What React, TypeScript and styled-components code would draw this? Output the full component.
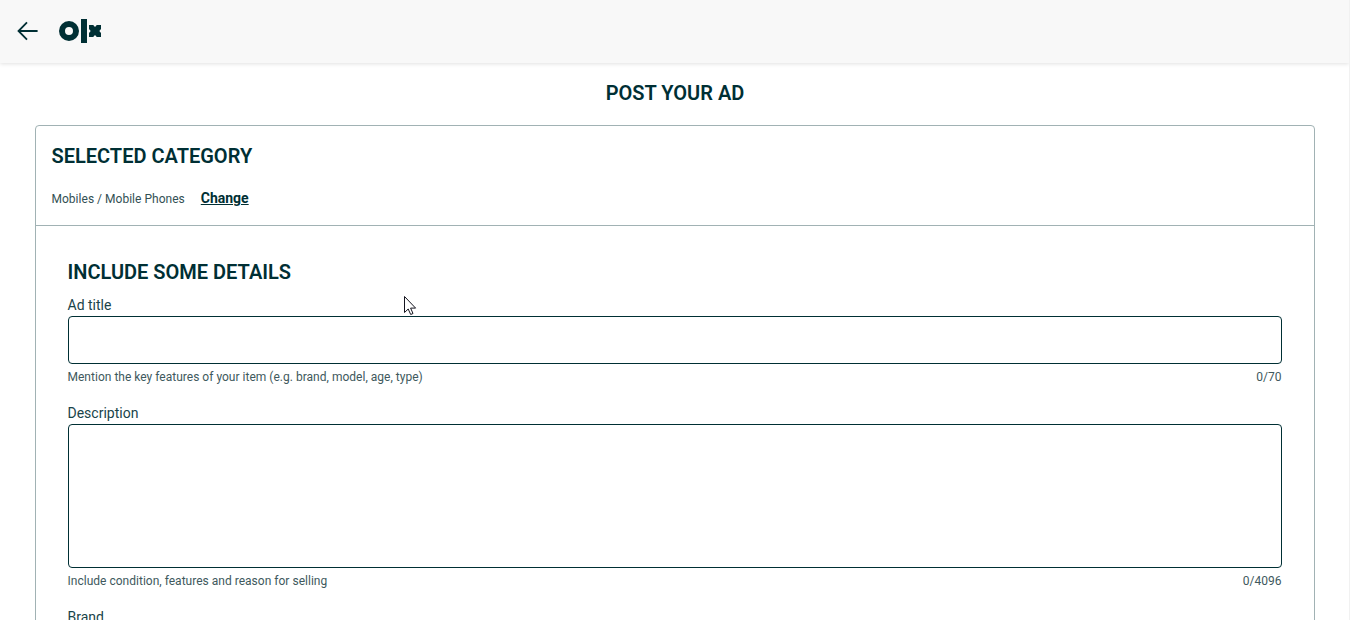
import React from "react";
import styled, { createGlobalStyle } from "styled-components";

const INK = "#002f34";

const GlobalStyle = createGlobalStyle`
  * { box-sizing: border-box; }
  html, body { margin: 0; height: 100%; overflow: hidden; background: #fff; }
  body { font-family: Roboto, "Liberation Sans", sans-serif; color: ${INK}; }
`;

const Page = styled.div`
  height: 620px;
  overflow: hidden;
  border-right: 1px solid #f1f1f1;
  display: flex;
  flex-direction: column;
  align-items: center;
`;

const Header = styled.header`
  flex: none;
  width: 100%;
  height: 63px;
  padding: 0 0 2px 16px;
  display: flex;
  align-items: center;
  gap: 19px;
  background: #f8f8f8;
  box-shadow: 0 1px 4px rgba(0, 0, 0, 0.12);
`;

const BackButton = styled.button`
  width: 24px;
  height: 24px;
  padding: 0;
  border: 0;
  background: none;
  display: flex;
`;

const PageTitle = styled.h1`
  margin: 18px 0 20px;
  padding-left: 1px;
  font-size: 20px;
  line-height: 24px;
  font-weight: 600;
`;

const Card = styled.main`
  flex: none;
  width: 1280px;
  height: 700px;
  border: 1px solid #a1b2b4;
  border-radius: 4px;
`;

const CategorySection = styled.section`
  height: 100px;
  padding: 18px 16px 0;
  border-bottom: 1px solid #a1b2b4;
`;

const Heading = styled.h2`
  margin: 0;
  font-size: 20px;
  line-height: 24px;
  font-weight: 600;
`;

const CategoryRow = styled.div`
  display: flex;
  align-items: center;
  gap: 16px;
  margin-top: 20px;
  height: 20px;
`;

const Breadcrumb = styled.span`
  font-size: 12px;
  line-height: 18px;
  padding-top: 2px;
  letter-spacing: 0.02px;
  color: #335054;
`;

const ChangeLink = styled.a`
  font-size: 14px;
  line-height: 20px;
  font-weight: 700;
  text-decoration: underline;
`;

const DetailsSection = styled.section`
  padding: 34px 32px 0;
`;

const Field = styled.div<{ $gap?: number }>`
  display: flex;
  flex-direction: column;
  margin-top: ${(p) => p.$gap ?? 18}px;
`;

const Label = styled.label`
  font-size: 14px;
  line-height: 18px;
  margin-bottom: 2px;
  color: #19444a;
`;

const TextInput = styled.input`
  height: 48px;
  border: 1px solid ${INK};
  border-radius: 4px;
  padding: 0 12px;
  background: #fff;
  outline: none;
`;

const TextBox = styled.textarea`
  height: 144px;
  border: 1px solid ${INK};
  border-radius: 4px;
  padding: 12px;
  background: #fff;
  resize: none;
  outline: none;
`;

const Hint = styled.div`
  display: flex;
  justify-content: space-between;
  margin-top: 5px;
  font-size: 12px;
  line-height: 16px;
  letter-spacing: 0.015px;
  color: #40595d;
`;

const Pointer = styled.svg`
  position: absolute;
  left: 403px;
  top: 295px;
`;

function BackArrow() {
  return (
    <svg width="24" height="24" viewBox="0 0 24 24" fill="none" stroke={INK} strokeWidth="1.8">
      <path d="M21.6 12H2.6M11 3.3L2.5 12l8.5 8.7" />
    </svg>
  );
}

function Logo() {
  return (
    <svg width="43" height="24" viewBox="0 0 43 24" fill={INK}>
      <circle cx="10" cy="12" r="7" fill="none" stroke={INK} strokeWidth="6" />
      <rect x="22" y="0" width="6" height="24" />
      <path d="M30 6h4.2l1.8 1.9L37.8 6H42v4.1L40.3 12l1.7 1.9V18h-4.2L36 16.1 34.2 18H30v-4.1l1.7-1.9-1.7-1.9z" />
    </svg>
  );
}

export default function App() {
  return (
    <Page>
      <GlobalStyle />
      <Header>
        <BackButton aria-label="Back"><BackArrow /></BackButton>
        <Logo />
      </Header>
      <PageTitle>POST YOUR AD</PageTitle>
      <Card>
        <CategorySection>
          <Heading>SELECTED CATEGORY</Heading>
          <CategoryRow>
            <Breadcrumb>Mobiles / Mobile Phones</Breadcrumb>
            <ChangeLink>Change</ChangeLink>
          </CategoryRow>
        </CategorySection>
        <DetailsSection>
          <Heading>INCLUDE SOME DETAILS</Heading>
          <Field $gap={12}>
            <Label>Ad title</Label>
            <TextInput />
            <Hint>
              <span>Mention the key features of your item (e.g. brand, model, age, type)</span>
              <span>0/70</span>
            </Hint>
          </Field>
          <Field $gap={19}>
            <Label>Description</Label>
            <TextBox />
            <Hint>
              <span>Include condition, features and reason for selling</span>
              <span>0/4096</span>
            </Hint>
          </Field>
          <Field $gap={19}>
            <Label>Brand</Label>
          </Field>
        </DetailsSection>
      </Card>
      <Pointer width="14" height="21" viewBox="0 0 14 21">
        <path
          d="M1.5 1.5v16l3.7-3.5 2.5 5.5 2.3-1-2.4-5.4h5z"
          fill="#fff"
          stroke="#15151f"
          strokeWidth="1"
        />
      </Pointer>
    </Page>
  );
}
